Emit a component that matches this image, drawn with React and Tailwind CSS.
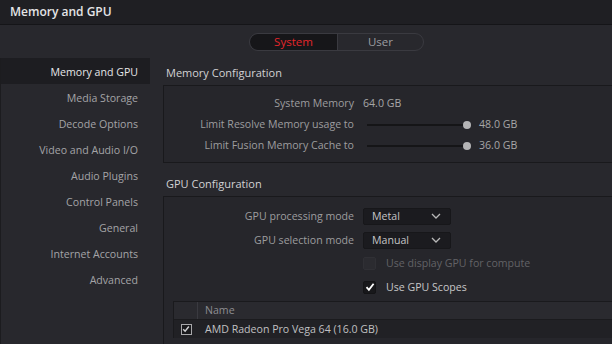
import React from 'react';

const sideItems = [
  'Memory and GPU',
  'Media Storage',
  'Decode Options',
  'Video and Audio I/O',
  'Audio Plugins',
  'Control Panels',
  'General',
  'Internet Accounts',
  'Advanced',
];

function Chevron() {
  return (
    <svg width="10" height="6" viewBox="0 0 10 6" className="text-[#b8b8b8]">
      <path d="M1 1l4 4 4-4" fill="none" stroke="currentColor" strokeWidth="1.3" />
    </svg>
  );
}

function Check({ size = 10 }) {
  return (
    <svg width={size} height={size} viewBox="0 0 10 10">
      <path d="M1.5 5.2l2.4 2.6L8.6 1.8" fill="none" stroke="currentColor" strokeWidth="1.8" />
    </svg>
  );
}

function Row({ label, children, h = 'h-[21px]' }) {
  return (
    <div className={`flex items-center ${h}`}>
      <div className="w-[190px] text-right text-[#9d9d9f]">{label}</div>
      <div className="ml-[9px] flex items-center">{children}</div>
    </div>
  );
}

function Slider({ value }) {
  return (
    <div className="flex items-center">
      <div className="ml-[4px] w-[100px] h-[2px] bg-[#151517] relative">
        <div className="absolute right-[-4px] top-[-3px] w-[8px] h-[8px] rounded-full bg-[#b4b4b6]" />
      </div>
      <span className="ml-[12px] text-[#a6a6a8]">{value}</span>
    </div>
  );
}

function Select({ value }) {
  return (
    <div className="w-[88px] h-[17px] rounded-[2px] bg-[#1b1b1f] border border-[#17171a] flex items-center justify-between pl-[8px] pr-[9px] text-[#c4c4c6]">
      <span>{value}</span>
      <Chevron />
    </div>
  );
}

export default function App() {
  return (
    <div
      className="w-[612px] h-[344px] bg-[#28282d] overflow-hidden flex flex-col text-[10.6px] leading-none"
      style={{ fontFamily: '"Open Sans", "Noto Sans", sans-serif' }}
    >
      <div className="h-[25px] shrink-0 bg-[#1f1f23] border-b border-[#151518] flex items-center px-[10px] text-[12px] font-semibold text-[#e4e4e6]">
        Memory and GPU
      </div>

      <div className="pt-[8px] pl-[249px] shrink-0">
        <div className="w-[175px] h-[18px] rounded-full border border-[#3a3a40] flex overflow-hidden text-[11.5px]">
          <div className="w-[88px] bg-[#161619] border-r border-[#3a3a40] flex items-center justify-center text-[#e3262b] rounded-l-full">
            System
          </div>
          <div className="flex-1 flex items-center justify-center text-[#9c9ca0]">User</div>
        </div>
      </div>

      <div className="flex flex-1 mt-[7px] min-h-0">
        <div className="w-[150px] shrink-0 border-l border-[#1c1c1f]">
          {sideItems.map((s, i) => (
            <div
              key={s}
              className={`h-[26px] flex items-center justify-end pr-[12px] pt-[2px] ${
                i === 0 ? 'bg-[#1d1d21] text-[#e6e6e8]' : 'text-[#a4a4a7]'
              }`}
            >
              {s}
            </div>
          ))}
        </div>

        <div className="flex-1 ml-[13px] flex flex-col">
          <div className="h-[27px] flex items-center pl-[3px] pt-[2px] text-[11px] text-[#d2d2d4]">
            Memory Configuration
          </div>
          <div className="bg-[#26262b] border-t border-b border-l border-[#19191c] pt-[7px] pb-[6px]">
            <Row label="System Memory">
              <span className="text-[#a6a6a8]">64.0 GB</span>
            </Row>
            <Row label="Limit Resolve Memory usage to">
              <Slider value="48.0 GB" />
            </Row>
            <Row label="Limit Fusion Memory Cache to">
              <Slider value="36.0 GB" />
            </Row>
          </div>

          <div className="h-[33px] flex items-end pb-[7px] pl-[3px] text-[11px] text-[#d2d2d4]">
            GPU Configuration
          </div>
          <div className="flex-1 bg-[#26262b] border-t border-l border-[#19191c] pt-[7px]">
            <Row label="GPU processing mode" h="h-[24px]">
              <Select value="Metal" />
            </Row>
            <Row label="GPU selection mode" h="h-[24px]">
              <Select value="Manual" />
            </Row>
            <Row label="" h="h-[23px]">
              <div className="w-[13px] h-[13px] rounded-[2px] bg-[#2b2b30] border border-[#303035]" />
              <span className="ml-[10px] text-[#626266]">Use display GPU for compute</span>
            </Row>
            <Row label="" h="h-[24px]">
              <div className="w-[13px] h-[13px] rounded-[2px] bg-[#18181b] border border-[#141416] flex items-center justify-center text-white">
                <Check />
              </div>
              <span className="ml-[10px] text-[#c6c6c8]">Use GPU Scopes</span>
            </Row>

            <div className="ml-[9px] mt-[2px] bg-[#212125] border-t border-l border-[#1a1a1d]">
              <div className="h-[18px] flex items-center bg-[#2a2a2f] border-b border-[#1b1b1e]">
                <div className="w-[24px] h-full border-r border-[#3a3a40]" />
                <span className="ml-[7px] text-[#8e8e92]">Name</span>
              </div>
              <div className="h-[18px] flex items-center">
                <div className="w-[24px] flex justify-center">
                  <div className="w-[11px] h-[11px] border border-[#a8a8ab] bg-[#1a1a1d] flex items-center justify-center text-[#d0d0d2]">
                    <Check size={8} />
                  </div>
                </div>
                <span className="ml-[7px] text-[#c0c0c2]">AMD Radeon Pro Vega 64 (16.0 GB)</span>
              </div>
            </div>
          </div>
        </div>
      </div>
    </div>
  );
}
